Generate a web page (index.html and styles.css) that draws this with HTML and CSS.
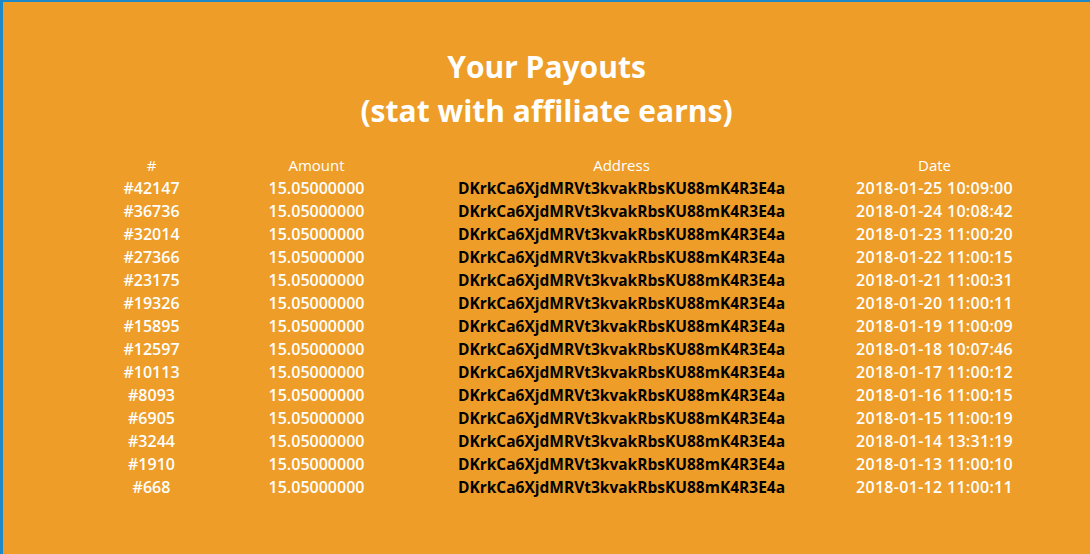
FILE: index.html
```html
<!DOCTYPE html>
<html>
<head>
<meta charset="utf-8">
<link rel="stylesheet" href="styles.css">
</head>
<body>
<div class="page">
  <h1 class="title">Your Payouts<br>(stat with affiliate earns)</h1>
  <div class="table">
    <div class="row head"><span>#</span><span>Amount</span><span>Address</span><span>Date</span></div>
    <div class="row"><span>#42147</span><span>15.05000000</span><span class="addr">DKrkCa6XjdMRVt3kvakRbsKU88mK4R3E4a</span><span>2018-01-25 10:09:00</span></div>
    <div class="row"><span>#36736</span><span>15.05000000</span><span class="addr">DKrkCa6XjdMRVt3kvakRbsKU88mK4R3E4a</span><span>2018-01-24 10:08:42</span></div>
    <div class="row"><span>#32014</span><span>15.05000000</span><span class="addr">DKrkCa6XjdMRVt3kvakRbsKU88mK4R3E4a</span><span>2018-01-23 11:00:20</span></div>
    <div class="row"><span>#27366</span><span>15.05000000</span><span class="addr">DKrkCa6XjdMRVt3kvakRbsKU88mK4R3E4a</span><span>2018-01-22 11:00:15</span></div>
    <div class="row"><span>#23175</span><span>15.05000000</span><span class="addr">DKrkCa6XjdMRVt3kvakRbsKU88mK4R3E4a</span><span>2018-01-21 11:00:31</span></div>
    <div class="row"><span>#19326</span><span>15.05000000</span><span class="addr">DKrkCa6XjdMRVt3kvakRbsKU88mK4R3E4a</span><span>2018-01-20 11:00:11</span></div>
    <div class="row"><span>#15895</span><span>15.05000000</span><span class="addr">DKrkCa6XjdMRVt3kvakRbsKU88mK4R3E4a</span><span>2018-01-19 11:00:09</span></div>
    <div class="row"><span>#12597</span><span>15.05000000</span><span class="addr">DKrkCa6XjdMRVt3kvakRbsKU88mK4R3E4a</span><span>2018-01-18 10:07:46</span></div>
    <div class="row"><span>#10113</span><span>15.05000000</span><span class="addr">DKrkCa6XjdMRVt3kvakRbsKU88mK4R3E4a</span><span>2018-01-17 11:00:12</span></div>
    <div class="row"><span>#8093</span><span>15.05000000</span><span class="addr">DKrkCa6XjdMRVt3kvakRbsKU88mK4R3E4a</span><span>2018-01-16 11:00:15</span></div>
    <div class="row"><span>#6905</span><span>15.05000000</span><span class="addr">DKrkCa6XjdMRVt3kvakRbsKU88mK4R3E4a</span><span>2018-01-15 11:00:19</span></div>
    <div class="row"><span>#3244</span><span>15.05000000</span><span class="addr">DKrkCa6XjdMRVt3kvakRbsKU88mK4R3E4a</span><span>2018-01-14 13:31:19</span></div>
    <div class="row"><span>#1910</span><span>15.05000000</span><span class="addr">DKrkCa6XjdMRVt3kvakRbsKU88mK4R3E4a</span><span>2018-01-13 11:00:10</span></div>
    <div class="row"><span>#668</span><span>15.05000000</span><span class="addr">DKrkCa6XjdMRVt3kvakRbsKU88mK4R3E4a</span><span>2018-01-12 11:00:11</span></div>
  </div>
</div>
</body>
</html>
```

FILE: styles.css
```css
html, body {
  margin: 0;
  padding: 0;
  height: 100%;
}
body {
  background: #1e88c8;
  font-family: "Comic Sans MS", "Open Sans", sans-serif;
  color: #ffffff;
}
.page {
  margin: 2px 0 0 3px;
  height: 552px;
  background: #ed9d28;
  overflow: hidden;
}
.title {
  margin: 0;
  padding-top: 43px;
  text-align: center;
  font-size: 30px;
  line-height: 44px;
  font-weight: 700;
}
.table {
  width: 956px;
  margin: 20px auto 0 auto;
}
.row {
  display: grid;
  grid-template-columns: 166px 164px 446px 180px;
  height: 23px;
  align-items: center;
  text-align: center;
  font-size: 16px;
  font-weight: 600;
}
.row > span:last-child {
  letter-spacing: 0.3px;
}
.row.head {
  font-size: 15px;
  font-weight: 400;
}
.row.head > span:last-child {
  letter-spacing: 0;
}
.addr {
  color: #000000;
  font-weight: 700;
  font-size: 15.5px;
}
```
